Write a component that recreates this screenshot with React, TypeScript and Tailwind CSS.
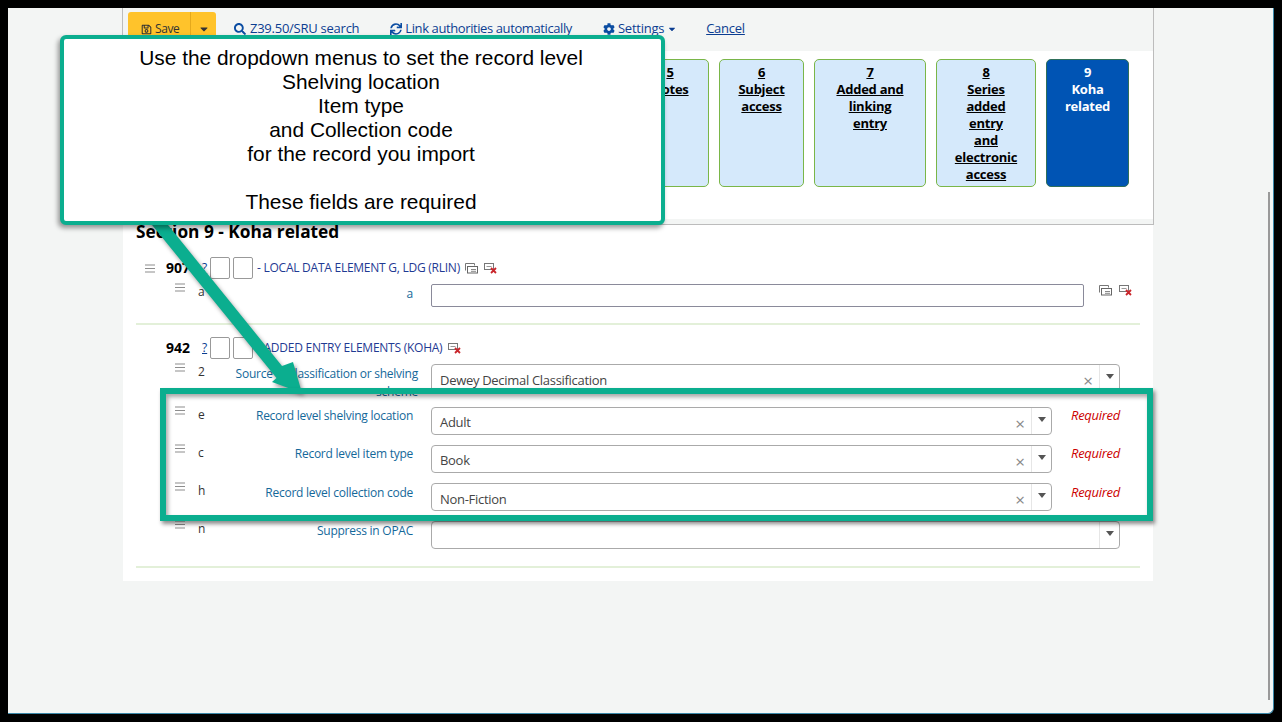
import React from "react";
import { FaRegSave, FaSearch, FaSync, FaCog, FaCaretDown } from "react-icons/fa";

const ui = { fontFamily: '"Open Sans", "Noto Sans", sans-serif' };

function Grip() {
  return (
    <svg width="10" height="9" viewBox="0 0 10 9" className="block">
      <path d="M0 1h10M0 4.5h10M0 8h10" stroke="#8d8d8d" strokeWidth="1.2" />
    </svg>
  );
}

function RepeatIcon() {
  return (
    <svg width="13" height="11" viewBox="0 0 13 11" className="block">
      <path d="M.5 7.5v-7h9v2" fill="none" stroke="#777" />
      <rect x="2.5" y="3.5" width="10" height="6.5" fill="#fff" stroke="#666" />
      <path d="M6 6.5h5M6 8.3h5" stroke="#888" />
    </svg>
  );
}

function DeleteIcon() {
  return (
    <svg width="13" height="11" viewBox="0 0 13 11" className="block">
      <rect x=".5" y=".5" width="9" height="6" fill="#fff" stroke="#777" />
      <path d="M2.5 3.5h5" stroke="#999" />
      <path d="M7 5l5 5M12 5l-5 5" stroke="#c9252b" strokeWidth="1.8" />
    </svg>
  );
}

function Tab({ n, lines, w, active }: { n: string; lines: string[]; w: string; active?: boolean }) {
  return (
    <div
      className={`${w} h-[128px] shrink-0 rounded-[5px] border pt-[4px] text-center text-[13px] leading-[17px] font-bold tracking-[-0.25px] ${
        active ? "border-[#2f6f5a] bg-[#0054b4] text-white" : "border-[#7ab648] bg-[#d5e9fb] text-black underline"
      }`}
    >
      <div>{n}</div>
      {lines.map((l) => (
        <div key={l}>{l}</div>
      ))}
    </div>
  );
}

function TagHead({ tag, title, repeat }: { tag: string; title: string; repeat?: boolean }) {
  return (
    <div className="flex h-[22px] items-center">
      <div className="ml-[9px] w-[21px]">{repeat ? <Grip /> : null}</div>
      <span className="-mt-[2px] w-[36px] text-[14px] font-bold text-black">{tag}</span>
      <span className="w-[8px] text-[12px] text-[#0b3d91] underline">?</span>
      <span className="h-[22px] w-[20px] rounded-[2px] border border-[#999]" />
      <span className="ml-[3px] h-[22px] w-[20px] rounded-[2px] border border-[#999]" />
      <span className="ml-[4px] text-[12px] tracking-[-0.25px] text-[#1f3a93]">{title}</span>
      {repeat ? (
        <span className="mt-[1px] ml-[5px]">
          <RepeatIcon />
        </span>
      ) : null}
      <span className="mt-[1px] ml-[6px]">
        <DeleteIcon />
      </span>
    </div>
  );
}

function Sub({
  code,
  label,
  children,
  after,
  className,
}: {
  code: string;
  label: React.ReactNode;
  children: React.ReactNode;
  after?: React.ReactNode;
  className?: string;
}) {
  return (
    <div className={`flex items-start ${className ?? ""}`}>
      <div className="ml-[39px] w-[23px] -mt-[1px]">
        <Grip />
      </div>
      <div className="-mt-[1px] w-[10px] text-[12px] leading-[17px] text-[#333]">{code}</div>
      <div className="w-[205px] text-right text-[12px] leading-[17px] tracking-[-0.25px] text-[#14689a]">{label}</div>
      <div className="ml-[18px]">{children}</div>
      {after}
    </div>
  );
}

function Select({ value, w, clear = true, low }: { value: string; w: string; clear?: boolean; low?: boolean }) {
  return (
    <div className={`${w} flex h-[28px] rounded-[4px] border border-[#aaa] bg-white`}>
      <div className={`flex-1 pl-[8px] text-[13px] leading-[19px] tracking-[-0.3px] text-[#444] ${low ? "pt-[6px]" : "pt-[5px]"}`}>{value}</div>
      {clear ? <div className="mr-[6px] pt-[6px] text-[17px] leading-[20px] text-[#888]">×</div> : null}
      <div className="flex w-[20px] items-center justify-center border-l border-[#e6e6e6] pb-[4px]">
        <span className="h-0 w-0 border-x-[4.5px] border-t-[5px] border-x-transparent border-t-[#555]" />
      </div>
    </div>
  );
}

function Required({ low }: { low?: boolean }) {
  return (
    <div className={`ml-[19px] text-[13px] leading-[17px] tracking-[-0.3px] text-[#cc0000] italic ${low ? "pt-[1px]" : ""}`}>Required</div>
  );
}

export default function App() {
  return (
    <div className="relative h-[722px] w-[1282px] overflow-hidden bg-black pt-[8px] pr-[8px] pb-[8px] pl-[8px]" style={ui}>
      <div className="relative h-[706px] w-[1266px] overflow-hidden rounded-br-[6px] border-r border-b border-[#3a87a8] bg-[#f3f5f4] pl-[114px]">
        <div className="w-[1032px] border-x border-b border-[#bcbcbc] bg-[#f3f5f4]">
          {/* toolbar */}
          <div className="flex h-[43px] items-start pt-[4px] pl-[5px] text-[13px] tracking-[-0.25px] text-[#0b3d91]">
            <div className="flex h-[34px] w-[88px] rounded-[3px] bg-[#ffc32b] text-[12px] text-[#333]">
              <div className="flex w-[63px] items-center gap-[3px] border-r border-[#e5a91c] pl-[13px]">
                <FaRegSave size={11} />
                <span className="tracking-[-0.4px]">Save</span>
              </div>
              <div className="flex flex-1 items-center justify-center">
                <FaCaretDown size={12} />
              </div>
            </div>
            <div className="ml-[18px] flex h-[34px] items-center gap-[4px]">
              <FaSearch size={12} className="text-[#0b4da2]" />
              <span>Z39.50/SRU search</span>
            </div>
            <div className="ml-[31px] flex h-[34px] items-center gap-[3px]">
              <FaSync size={12} className="text-[#0b4da2]" />
              <span className="tracking-[-0.4px]">Link authorities automatically</span>
            </div>
            <div className="ml-[31px] flex h-[34px] items-center gap-[3px]">
              <FaCog size={12} className="text-[#0b4da2]" />
              <span>Settings</span>
              <FaCaretDown size={10} />
            </div>
            <div className="ml-[29px] flex h-[34px] items-center underline">Cancel</div>
          </div>
          {/* tabs */}
          <div className="flex h-[168px] justify-end gap-[10px] bg-white pt-[8px] pr-[24px]">
            <Tab n="5" lines={["Notes"]} w="w-[78px]" />
            <Tab n="6" lines={["Subject", "access"]} w="w-[85px]" />
            <Tab n="7" lines={["Added and", "linking", "entry"]} w="w-[112px]" />
            <Tab n="8" lines={["Series", "added", "entry", "and", "electronic", "access"]} w="w-[100px]" />
            <Tab n="9" lines={["Koha", "related"]} w="w-[83px]" active />
          </div>
          <div className="h-[5px] bg-[#f3f5f4]" />
        </div>

        {/* section */}
        <div className="ml-[1px] h-[356px] w-[1030px] bg-white px-[13px]">
          <h2 className="text-[17.3px] leading-[13px] font-bold text-black">Section 9 - Koha related</h2>

          <div className="mt-[19px]">
            <TagHead tag="907" title="- LOCAL DATA ELEMENT G, LDG (RLIN)" repeat />
            <Sub
              className="mt-[5px]"
              code="a"
              label={<span className="relative top-[1px]">a</span>}
              after={
                <div className="ml-[15px] flex gap-[7px] pt-[1px]">
                  <RepeatIcon />
                  <DeleteIcon />
                </div>
              }
            >
              <div className="h-[23px] w-[653px] rounded-[2px] border border-[#8a8a9a] bg-white" />
            </Sub>
          </div>

          <div className="mt-[16px] h-[1px] border-t-2 border-[#e3f0d9]" />

          <div className="mt-[12px]">
            <TagHead tag="942" title="- ADDED ENTRY ELEMENTS (KOHA)" />
            <Sub
              className="mt-[5px] h-[43px]"
              code="2"
              label={<span className="relative top-[1px] -mr-[5px] block leading-[18px]">Source of classification or shelving scheme</span>}
            >
              <Select value="Dewey Decimal Classification" w="w-[689px]" low />
            </Sub>
            <Sub className="h-[38px]" code="e" label="Record level shelving location" after={<Required />}>
              <Select value="Adult" w="w-[621px]" />
            </Sub>
            <Sub className="h-[38px]" code="c" label="Record level item type" after={<Required />}>
              <Select value="Book" w="w-[621px]" />
            </Sub>
            <Sub
              className="h-[38px]"
              code="h"
              label={<span className="relative top-[1px]">Record level collection code</span>}
              after={<Required low />}
            >
              <Select value="Non-Fiction" w="w-[621px]" low />
            </Sub>
            <Sub className="h-[28px]" code="n" label={<span className="relative top-[1px]">Suppress in OPAC</span>}>
              <Select value="" w="w-[689px]" clear={false} />
            </Sub>
          </div>
          <div className="mt-[17px] border-t-2 border-[#e3f0d9]" />
        </div>

        {/* scrollbar */}
        <div className="absolute top-[184px] right-[3px] h-[508px] w-[2px] bg-[#999]" />
      </div>

      {/* annotation arrow */}
      <svg width="1282" height="722" className="pointer-events-none absolute top-0 left-0" style={{ filter: "drop-shadow(2px 3px 2px rgba(0,0,0,.4))" }}>
        <polygon points="148,220 164,220 282,366 293,362 302,393 272,382 276.5,378" fill="#0bae8f" />
      </svg>

      {/* annotation highlight */}
      <div className="absolute top-[388px] left-[160px] h-[133px] w-[993px] border-[6px] border-[#0bae8f] shadow-[2px_3px_4px_rgba(0,0,0,0.45),inset_2px_3px_4px_rgba(0,0,0,0.35)]" />

      {/* annotation callout */}
      <div
        className="absolute top-[35px] left-[60px] h-[190px] w-[605px] rounded-[6px] border-[4px] border-[#0bae8f] bg-white pt-[7px] pr-[3px] text-center text-[20.9px] leading-[24px] text-black shadow-[-2px_3px_5px_rgba(0,0,0,0.4)]"
        style={{ fontFamily: '"Liberation Sans", Arial, sans-serif' }}
      >
        <div>Use the dropdown menus to set the record level</div>
        <div>Shelving location</div>
        <div>Item type</div>
        <div>and Collection code</div>
        <div>for the record you import</div>
        <div>&nbsp;</div>
        <div>These fields are required</div>
      </div>
    </div>
  );
}
